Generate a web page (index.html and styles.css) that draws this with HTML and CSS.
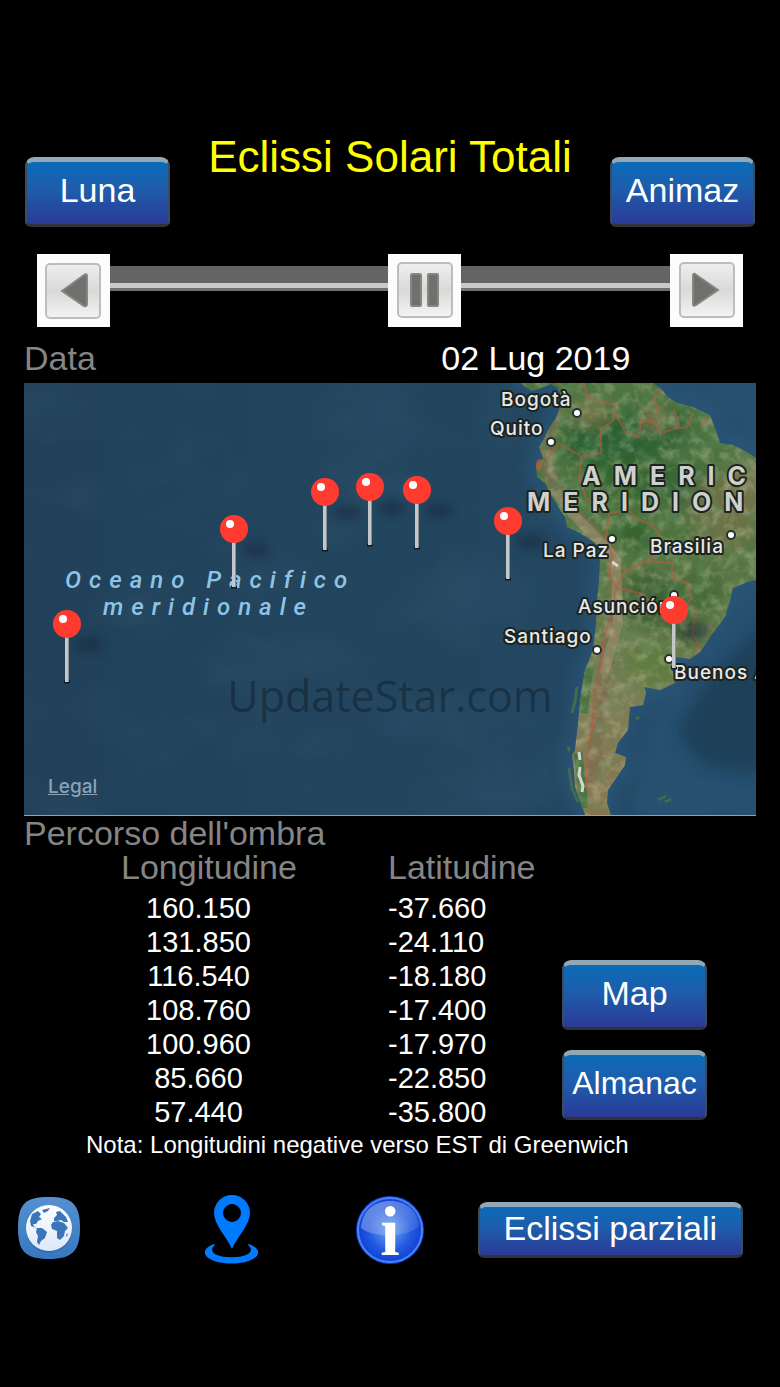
FILE: index.html
```html
<!DOCTYPE html>
<html lang="it">
<head>
    <meta charset="UTF-8">
    <meta name="viewport" content="width=device-width, initial-scale=1.0">
    <title>Eclissi Solari Totali</title>
    <link rel="stylesheet" href="styles.css">
</head>
<body>
    <div class="app">
        <header class="header">
            <button type="button" class="btn">Luna</button>
            <h1>Eclissi Solari Totali</h1>
            <button type="button" class="btn">Animaz</button>
        </header>

        <div class="player">
            <button type="button" class="player-btn" aria-label="Indietro">
                <svg viewBox="0 0 73 73">
                    <defs>
                        <linearGradient id="key" x1="0" y1="0" x2="0" y2="1">
                            <stop offset="0" stop-color="#efefef"/>
                            <stop offset="0.5" stop-color="#d9d9d9"/>
                            <stop offset="1" stop-color="#f4f4f4"/>
                        </linearGradient>
                    </defs>
                    <rect class="key" x="9" y="10" width="54" height="54" rx="4"/>
                    <path class="glyph" d="M25 37 L47 21 Q50 19 50 22 V50 Q50 53 47 52z"/>
                </svg>
            </button>
            <span class="track"></span>
            <button type="button" class="player-btn" aria-label="Pausa">
                <svg viewBox="0 0 73 73">
                    <rect class="key" x="10" y="9" width="54" height="54" rx="4"/>
                    <rect class="glyph" x="23" y="20" width="10" height="32" rx="1"/>
                    <rect class="glyph" x="40" y="20" width="10" height="32" rx="1"/>
                </svg>
            </button>
            <span class="track"></span>
            <button type="button" class="player-btn" aria-label="Avanti">
                <svg viewBox="0 0 73 73">
                    <rect class="key" x="10" y="9" width="54" height="54" rx="4"/>
                    <path class="glyph" d="M48 36 L25 20 Q23 19 23 22 V50 Q23 53 26 51z"/>
                </svg>
            </button>
        </div>

        <div class="date-row">
            <span class="label">Data</span>
            <span>02 Lug 2019</span>
        </div>

        <div class="map">
            <svg viewBox="0 0 732 432">
                <defs>
                    <linearGradient id="sea" x1="0" y1="0" x2="1" y2="0">
                        <stop offset="0" stop-color="#21415a"/>
                        <stop offset="0.6" stop-color="#23465f"/>
                        <stop offset="1" stop-color="#244a69"/>
                    </linearGradient>
                    <linearGradient id="ground" x1="0" y1="0" x2="0" y2="1">
                        <stop offset="0" stop-color="#4d7442"/>
                        <stop offset="0.35" stop-color="#4f743f"/>
                        <stop offset="0.6" stop-color="#66794a"/>
                        <stop offset="0.75" stop-color="#7f7d55"/>
                        <stop offset="1" stop-color="#85754f"/>
                    </linearGradient>
                    <filter id="soft" x="-50%" y="-50%" width="200%" height="200%">
                        <feGaussianBlur stdDeviation="8"/>
                    </filter>
                    <filter id="shade" x="-50%" y="-50%" width="200%" height="200%">
                        <feGaussianBlur stdDeviation="4"/>
                    </filter>
                    <filter id="relief" x="0" y="0" width="100%" height="100%">
                        <feTurbulence type="fractalNoise" baseFrequency="0.09" numOctaves="4" seed="7"/>
                        <feColorMatrix values="0 0 0 0 0.66  0 0 0 0 0.62  0 0 0 0 0.42  2.4 0 0 0 -1.05"/>
                    </filter>
                    <filter id="relief-dark" x="0" y="0" width="100%" height="100%">
                        <feTurbulence type="fractalNoise" baseFrequency="0.07" numOctaves="4" seed="21"/>
                        <feColorMatrix values="0 0 0 0 0.14  0 0 0 0 0.3  0 0 0 0 0.14  2.4 0 0 0 -1.05"/>
                    </filter>
                    <filter id="waves" x="0" y="0" width="100%" height="100%">
                        <feTurbulence type="fractalNoise" baseFrequency="0.01 0.016" numOctaves="4" seed="4"/>
                        <feColorMatrix values="0 0 0 0 0.25  0 0 0 0 0.5  0 0 0 0 0.6  1.2 0 0 0 -0.52"/>
                    </filter>
                    <path id="coast" d="M494 -3 L500 3 L508 8 L517 5 L527 1 L534 5 L537 13 L536 24 L532 35 L524 47 L520 56 L515 64 L519 75 L512 82 L513 94 L521 100 L528 114 L535 125 L541 134 L543 144 L556 150 L571 160 L577 167 L576 177 L575 197 L573 217 L572 240 L569 267 L561 287 L557 310 L554 340 L551 367 L548 372 L550 387 L551 404 L558 424 L563 436 L588 436 L583 420 L584 407 L593 394 L601 382 L602 374 L591 370 L594 360 L604 347 L606 324 L619 322 L622 310 L620 304 L636 307 L651 300 L649 289 L646 284 L653 274 L666 276 L676 269 L689 250 L701 234 L706 218 L709 205 L723 199 L736 196 V78 L723 69 L709 62 L696 60 L692 48 L689 40 L686 32 L669 24 L653 20 L644 14 L639 8 L626 -3 L545 -3 L540 -1z"/>
                    <clipPath id="land">
                        <use href="#coast"/>
                    </clipPath>
                    <g id="pin">
                        <ellipse class="pin-shadow" cx="22" cy="21" rx="14" ry="8"/>
                        <path d="M-3 58 H3" stroke="#101c26" stroke-width="3"/>
                        <rect x="-2" y="12" width="4" height="46" fill="#c4c7ca"/>
                        <rect x="1" y="12" width="1" height="46" fill="#8b9094"/>
                        <circle r="14" fill="#ff3b30"/>
                        <circle cx="-4" cy="-5" r="4" fill="#fff"/>
                    </g>
                </defs>

                <!-- ocean -->
                <rect width="732" height="432" fill="url(#sea)"/>
                <rect width="732" height="432" filter="url(#waves)" opacity="0.1"/>
                <path class="shelf" d="M626 -10 L650 10 L700 40 L740 62 V-10z"/>
                <use href="#coast" class="shelf-line"/>
                <path class="shelf" d="M604 440 L610 380 L625 330 L680 285 L720 215 L740 200 V250 L690 290 L655 350 L690 390 L740 395 V440z"/>
                <path class="deep" d="M740 240 L680 305 L655 350 L680 380 L740 390z"/>

                <!-- land -->
                <use href="#coast" fill="url(#ground)"/>
                <g clip-path="url(#land)">
                    <g filter="url(#soft)">
                        <ellipse cx="590" cy="60" rx="52" ry="30" fill="#2c6030"/>
                        <ellipse cx="635" cy="45" rx="34" ry="22" fill="#316434"/>
                        <ellipse cx="620" cy="95" rx="50" ry="22" fill="#35652f"/>
                        <ellipse cx="670" cy="105" rx="30" ry="22" fill="#3d663e"/>
                        <ellipse cx="610" cy="150" rx="18" ry="16" fill="#35622f"/>
                        <ellipse cx="565" cy="30" rx="18" ry="10" fill="#80794e"/>
                        <ellipse cx="632" cy="35" rx="9" ry="7" fill="#a8855e"/>
                        <ellipse cx="700" cy="130" rx="34" ry="40" fill="#6b7245"/>
                        <ellipse cx="722" cy="100" rx="14" ry="26" fill="#7c7550"/>
                        <ellipse cx="625" cy="215" rx="24" ry="30" fill="#3c6132"/>
                        <ellipse cx="675" cy="210" rx="28" ry="22" fill="#476c38"/>
                        <ellipse cx="630" cy="282" rx="28" ry="22" fill="#607c40"/>
                        <ellipse cx="660" cy="248" rx="18" ry="14" fill="#3f5c35"/>
                    </g>
                    <path class="andes" d="M535 22 C516 60 520 85 532 105 C548 130 565 146 585 166 C594 190 592 215 588 245 C582 275 576 310 573 345 L570 400"/>
                    <path class="andes pale" d="M532 108 C550 138 575 152 592 178 L594 240 L580 290"/>
                    <path class="forest" d="M565 285 L559 330 M554 370 L560 425"/>
                    <rect x="480" width="252" height="432" filter="url(#relief)" opacity="0.4"/>
                    <rect x="480" width="252" height="432" filter="url(#relief-dark)" opacity="0.4"/>
                    <path class="snow" d="M555 369 l1 8 M556 384 l-1 8 l4 11 l-1 6"/>
                    <path class="salt" d="M588 179 l6 4"/>
                </g>
                <path class="border" d="M559 -1 L564 15 L591 22 L589 38 L577 46 L577 70 L558 74 L535 60 L524 75 M591 30 L602 50 L615 54 L617 38 L630 39 L637 50 L650 46 L663 44 L669 30 M650 26 L655 44 M637 5 L630 14 L634 30 M676 44 L684 35 M558 74 L555 95 L562 115 L585 130 L582 155 L588 172 M585 130 L605 127 L612 135 L630 143 L637 155 L630 172 L622 178 M588 172 L585 190 L592 205 L588 230 L580 255 L577 280 L571 310 L568 345 L562 380 L563 405 M592 205 L600 190 L622 178 L648 180 L648 195 L663 200 L667 215 L660 228 L645 220 M592 205 L615 210 L640 228 M673 225 L668 250 L675 262 L672 270"/>
                <ellipse cx="515" cy="82" rx="3" ry="6" class="salt-flat"/>
                <path class="isle" d="M634 417 l8 -4 M641 419 l6 -3 M612 336 l3 -2"/>
                <path class="chile" d="M548 330 l3 -12 l2 -14 M546 368 l-2 -4 M545 385 l3 20 l6 14"/>

                <!-- labels -->
                <g class="ocean-name">
                    <text x="41" y="205">Oceano Pacifico</text>
                    <text x="79" y="232">meridionale</text>
                </g>
                <g class="continent">
                    <text x="558" y="102">AMERIC</text>
                    <text x="503" y="128">MERIDION</text>
                </g>
                <g class="city">
                    <text x="477" y="23">Bogotà</text>
                    <text x="466" y="52">Quito</text>
                    <text x="519" y="174">La Paz</text>
                    <text x="626" y="170">Brasilia</text>
                    <text x="554" y="230">Asunción</text>
                    <text x="480" y="260">Santiago</text>
                    <text x="650" y="296">Buenos A</text>
                </g>
                <g class="city-dot">
                    <circle cx="553" cy="30" r="4"/>
                    <circle cx="527" cy="59" r="4"/>
                    <circle cx="588" cy="156" r="4"/>
                    <circle cx="707" cy="152" r="4"/>
                    <circle cx="650" cy="212" r="4"/>
                    <circle cx="573" cy="267" r="4"/>
                    <circle cx="645" cy="276" r="4"/>
                </g>

                <!-- eclipse path -->
                <use href="#pin" x="43" y="241"/>
                <use href="#pin" x="210" y="146"/>
                <use href="#pin" x="301" y="109"/>
                <use href="#pin" x="346" y="104"/>
                <use href="#pin" x="393" y="107"/>
                <use href="#pin" x="484" y="138"/>
                <use href="#pin" x="650" y="227"/>

                <text class="watermark" x="366" y="329">UpdateStar.com</text>
            </svg>
            <a href="#legal" class="legal">Legal</a>
        </div>

        <h2>Percorso dell'ombra</h2>
        <div class="shadow-path">
            <table>
                <thead>
                    <tr><th>Longitudine</th><th>Latitudine</th></tr>
                </thead>
                <tbody>
                    <tr><td>160.150</td><td>-37.660</td></tr>
                    <tr><td>131.850</td><td>-24.110</td></tr>
                    <tr><td>116.540</td><td>-18.180</td></tr>
                    <tr><td>108.760</td><td>-17.400</td></tr>
                    <tr><td>100.960</td><td>-17.970</td></tr>
                    <tr><td>85.660</td><td>-22.850</td></tr>
                    <tr><td>57.440</td><td>-35.800</td></tr>
                </tbody>
            </table>
            <div class="side-buttons">
                <button type="button" class="btn">Map</button>
                <button type="button" class="btn btn-small">Almanac</button>
            </div>
        </div>
        <p class="note">Nota: Longitudini negative verso EST di Greenwich</p>

        <nav class="toolbar">
            <button type="button" class="icon-btn" aria-label="Mondo">
                <svg width="62" height="66" viewBox="0 0 62 66">
                    <defs>
                        <linearGradient id="tile" x1="0" y1="0" x2="0" y2="1">
                            <stop offset="0" stop-color="#5591d0"/>
                            <stop offset="1" stop-color="#3777bf"/>
                        </linearGradient>
                        <linearGradient id="disc" x1="0" y1="0" x2="0" y2="1">
                            <stop offset="0" stop-color="#fff"/>
                            <stop offset="1" stop-color="#dce8f8"/>
                        </linearGradient>
                    </defs>
                    <path d="M31 0 C54 0 62 7 62 31 C62 54 54 62 31 62 C7 62 0 54 0 31 C0 7 7 0 31 0z" fill="url(#tile)"/>
                    <circle cx="31" cy="33" r="23" fill="#2c64a6" opacity="0.6"/>
                    <circle cx="31" cy="31" r="23" fill="url(#disc)"/>
                    <g fill="#3a76b8">
                        <path d="M12 24 L14 17 L20 14 L23 17 L21 20 L24 22 L20 24 L18 27 L15 27 L17 31 L21 32 L13 29z"/>
                        <path d="M24 13 L32 11 L30 14 L26 16z"/>
                        <path d="M19 31 L24 31 L29 35 L27 41 L23 44 L21 48 L19 45 L20 39 L18 35z"/>
                        <path d="M36 21 L39 18 L38 15 L42 14 L48 20 L50 25 L46 25 L43 23 L39 24 L36 24z"/>
                        <path d="M35 25 L40 24 L46 26 L50 31 L47 34 L46 39 L42 43 L39 41 L39 34 L34 32 L33 28z"/>
                        <path d="M48 38 l2 -2 l-1 4z"/>
                    </g>
                </svg>
            </button>
            <button type="button" class="icon-btn" aria-label="Posizione">
                <svg width="53" height="69" viewBox="0 0 53 69">
                    <g fill="#007aff">
                        <path fill-rule="evenodd" d="M27 54 C22 42 9 30 9 18 A18 18 0 0 1 45 18 C45 30 32 42 27 54z M27 9 A9 9 0 0 0 27 27 A9 9 0 0 0 27 9z"/>
                        <path d="M9 49 C-2 53 -3 60 5 64 C15 70 38 70 48 64 C56 60 55 53 44 49 L43 50 C48 54 46 58 41 60 C34 63 19 63 12 60 C7 58 5 54 10 50z"/>
                    </g>
                </svg>
            </button>
            <button type="button" class="icon-btn" aria-label="Informazioni">
                <svg width="68" height="68" viewBox="0 0 68 68">
                    <defs>
                        <radialGradient id="ball" cx="0.5" cy="0.5" r="0.55">
                            <stop offset="0" stop-color="#6fa4f2"/>
                            <stop offset="0.6" stop-color="#2259e0"/>
                            <stop offset="1" stop-color="#0a3bd0"/>
                        </radialGradient>
                        <linearGradient id="gloss" x1="0" y1="0" x2="1" y2="1">
                            <stop offset="0" stop-color="#fff" stop-opacity="0.4"/>
                            <stop offset="1" stop-color="#fff" stop-opacity="0.08"/>
                        </linearGradient>
                    </defs>
                    <circle cx="34" cy="34" r="34" fill="#1443d8"/>
                    <circle cx="34" cy="34" r="32" fill="url(#ball)" stroke="#4b83f5" stroke-width="2"/>
                    <path d="M5 32 C6 14 19 5 34 5 C49 5 62 14 63 30 C54 41 18 43 5 32z" fill="url(#gloss)"/>
                    <text class="info-letter" x="34" y="59">i</text>
                </svg>
            </button>
            <button type="button" class="btn btn-wide">Eclissi parziali</button>
        </nav>
    </div>
</body>
</html>
```
FILE: styles.css
```css
:root {
    --title-color: #ffff00;
    --label-color: #858585;
    --text-color: #ffffff;
    --background-color: #000000;
}

* {
    box-sizing: border-box;
}

body {
    margin: 0;
    background: var(--background-color);
    color: var(--text-color);
    font-family: "Liberation Sans", Arial, sans-serif;
    font-size: 34px;
    line-height: 34px;
}

.app {
    padding: 132px 24px 120px;
}

h1,
h2,
p {
    margin: 0;
    font-weight: normal;
}

button {
    font-family: inherit;
    cursor: pointer;
}

.header {
    display: flex;
    justify-content: space-between;
    align-items: flex-end;
    height: 95px;
    padding: 0 1px;
}

h1 {
    align-self: flex-start;
    color: var(--title-color);
    font-size: 44px;
    line-height: 50px;
}

.btn {
    width: 145px;
    height: 70px;
    padding: 0 0 6px;
    border: solid;
    border-width: 5px 2px 3px;
    border-color: #93a8b6 #3d4c5c #30333a;
    border-radius: 9px 9px 6px 6px;
    background: linear-gradient(#0a6cb8, #1f5cab 45%, #2a3a96);
    color: var(--text-color);
    font-size: 34px;
    line-height: 40px;
    white-space: nowrap;
}

.btn-small {
    font-size: 32px;
}

.btn-wide {
    width: 100%;
    height: 56px;
}

/* player */

.player {
    display: grid;
    grid-template-columns: 73px 4fr 73px 3fr 73px;
    margin-top: 27px;
    padding: 0 13px;
}

.player-btn {
    height: 73px;
    padding: 0;
    border: none;
    background: #fcfcfc;
}

.player-btn svg {
    display: block;
    width: 100%;
}

.key {
    fill: url(#key);
    stroke: #bdbdbd;
    stroke-width: 2;
}

.glyph {
    fill: #6f716d;
    stroke: #858783;
    stroke-width: 2;
}

.track {
    height: 25px;
    margin-top: 12px;
    background: linear-gradient(#646464 17px, #c9c9c9 17px 22px, #707070 22px);
}

.date-row {
    display: grid;
    grid-template-columns: 57% 43%;
    margin: 11px 0 5px;
    line-height: 40px;
}

.label,
h2,
th {
    color: var(--label-color);
}

h2 {
    font-size: 34px;
}

/* map */

.map {
    position: relative;
    border-bottom: 1px solid #8fa3ae;
    font-family: Inter, "Open Sans", sans-serif;
}

.map svg {
    display: block;
    width: 100%;
}

.shelf,
.shelf-line {
    fill: #2a5578;
    filter: url(#soft);
    opacity: 0.5;
}

.shelf-line {
    stroke: #2f6288;
    stroke-width: 14;
}

.deep {
    fill: #1f4059;
    filter: url(#soft);
}

.andes {
    fill: none;
    stroke: #7d6a50;
    stroke-width: 14;
    opacity: 0.6;
}

.andes.pale {
    stroke: #a08e6c;
    stroke-width: 10;
}

.forest {
    fill: none;
    stroke: #4b7340;
    stroke-width: 9;
}

.snow,
.salt {
    fill: none;
    stroke: #d4d6d0;
    stroke-width: 3;
}

.border {
    fill: none;
    stroke: #c2553c;
    stroke-width: 2;
    opacity: 0.55;
}

.salt-flat {
    fill: #b0613c;
    opacity: 0.7;
}

.isle,
.chile {
    fill: none;
    stroke: #43694f;
    stroke-width: 3;
}

.ocean-name {
    fill: #8fc4e6;
    font-family: Roboto, sans-serif;
    font-size: 24px;
    font-style: italic;
    font-weight: 500;
    letter-spacing: 8px;
}

.continent,
.city {
    fill: #e8e8e8;
    stroke: #1b2420;
    stroke-width: 4;
    stroke-linejoin: round;
    paint-order: stroke;
}

.continent {
    fill: #cfd1cc;
    font-size: 25px;
    font-weight: 700;
    letter-spacing: 13px;
}

.city {
    font-size: 19px;
    font-weight: 500;
    letter-spacing: 1px;
}

.city-dot {
    fill: #fff;
    stroke: #26302c;
    stroke-width: 2;
}

.pin-shadow {
    fill: #12283a;
    filter: url(#shade);
    opacity: 0.5;
}

.watermark {
    fill: #000;
    fill-opacity: 0.3;
    font-family: "Open Sans", sans-serif;
    font-size: 43px;
    text-anchor: middle;
}

.legal {
    position: absolute;
    left: 24px;
    bottom: 16px;
    color: #8ba3b5;
    font-size: 19px;
    font-weight: 500;
    line-height: 24px;
}

/* shadow path */

.shadow-path {
    display: flex;
    justify-content: space-between;
    align-items: flex-end;
    padding: 0 49px 0 97px;
}

table {
    border-collapse: collapse;
}

th {
    padding: 0 0 7px;
    font-weight: normal;
    text-align: left;
}

td {
    padding: 0;
    font-size: 29px;
}

th:first-child {
    width: 267px;
}

td:first-child {
    padding-right: 112px;
    text-align: center;
}

.side-buttons {
    display: flex;
    flex-direction: column;
    gap: 20px;
    margin-bottom: 9px;
}

.note {
    margin-top: 2px;
    padding-left: 62px;
    font-size: 24px;
    line-height: 28px;
}

/* toolbar */

.toolbar {
    display: grid;
    grid-template-columns: 187fr 151fr 121fr 265fr;
    align-items: center;
    justify-items: start;
    margin: 36px 13px 0 -6px;
}

.icon-btn {
    padding: 0;
    border: none;
    background: none;
}

.icon-btn svg {
    display: block;
}

.info-letter {
    fill: #fff;
    font-family: "Liberation Serif", serif;
    font-size: 70px;
    font-weight: bold;
    text-anchor: middle;
}
```
